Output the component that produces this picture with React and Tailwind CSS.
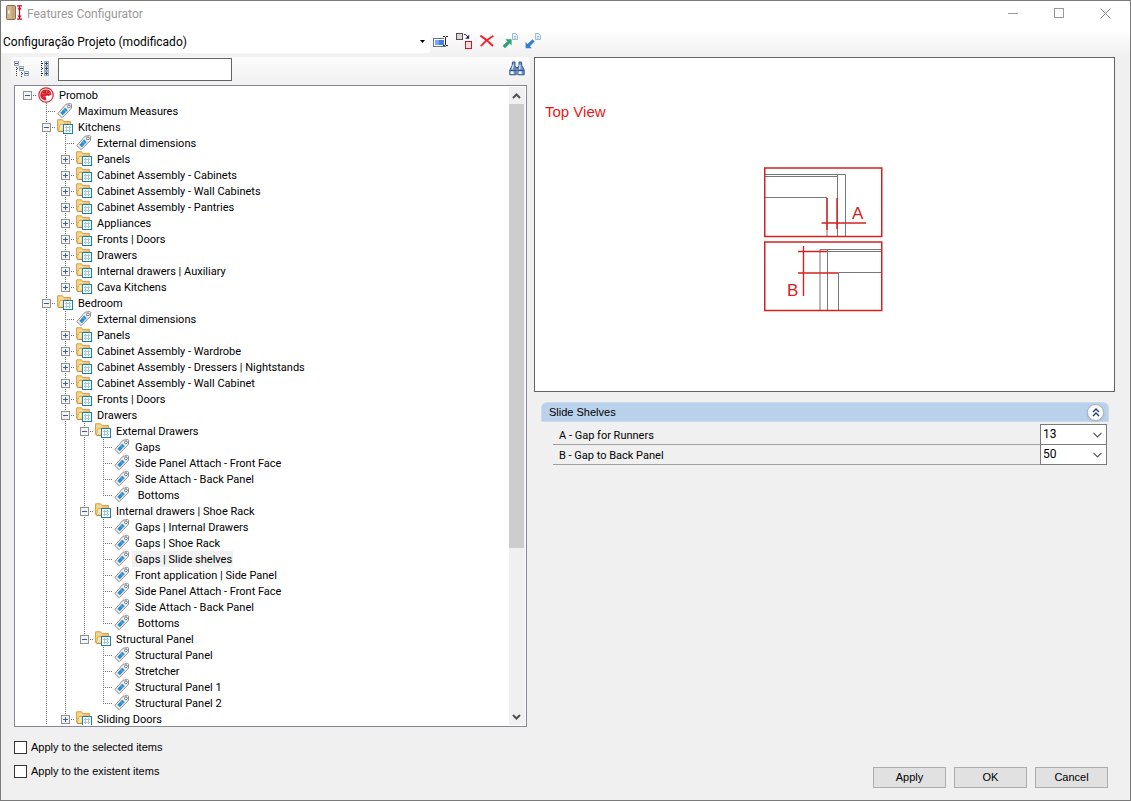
import React, { useState } from 'react';

const TREE = [
  {
    label: 'Promob',
    icon: 'root',
    open: true,
    children: [
      { label: 'Maximum Measures' },
      {
        label: 'Kitchens',
        open: true,
        children: [
          { label: 'External dimensions' },
          { label: 'Panels', children: [] },
          { label: 'Cabinet Assembly - Cabinets', children: [] },
          { label: 'Cabinet Assembly - Wall Cabinets', children: [] },
          { label: 'Cabinet Assembly - Pantries', children: [] },
          { label: 'Appliances', children: [] },
          { label: 'Fronts | Doors', children: [] },
          { label: 'Drawers', children: [] },
          { label: 'Internal drawers | Auxiliary', children: [] },
          { label: 'Cava Kitchens', children: [] },
        ],
      },
      {
        label: 'Bedroom',
        open: true,
        more: true,
        children: [
          { label: 'External dimensions' },
          { label: 'Panels', children: [] },
          { label: 'Cabinet Assembly - Wardrobe', children: [] },
          { label: 'Cabinet Assembly - Dressers | Nightstands', children: [] },
          { label: 'Cabinet Assembly - Wall Cabinet', children: [] },
          { label: 'Fronts | Doors', children: [] },
          {
            label: 'Drawers',
            open: true,
            children: [
              {
                label: 'External Drawers',
                open: true,
                children: [
                  { label: 'Gaps' },
                  { label: 'Side Panel Attach - Front Face' },
                  { label: 'Side Attach - Back Panel' },
                  { label: ' Bottoms' },
                ],
              },
              {
                label: 'Internal drawers | Shoe Rack',
                open: true,
                children: [
                  { label: 'Gaps | Internal Drawers' },
                  { label: 'Gaps | Shoe Rack' },
                  { label: 'Gaps | Slide shelves' },
                  { label: 'Front application | Side Panel' },
                  { label: 'Side Panel Attach - Front Face' },
                  { label: 'Side Attach - Back Panel' },
                  { label: ' Bottoms' },
                ],
              },
              {
                label: 'Structural Panel',
                open: true,
                children: [
                  { label: 'Structural Panel' },
                  { label: 'Stretcher' },
                  { label: 'Structural Panel 1' },
                  { label: 'Structural Panel 2' },
                ],
              },
            ],
          },
          { label: 'Sliding Doors', children: [] },
        ],
      },
    ],
  },
];

// guides holds one boolean per ancestor: does its line go on below this row
// more: siblings that are not loaded yet, so the line is not closed
function flatten(nodes, guides = [], path = '') {
  return nodes.flatMap((node, i) => {
    const last = i === nodes.length - 1 && !node.more;
    const id = `${path}/${i}`;
    const row = { ...node, id, guides, last };
    if (!node.open) return [row];
    return [row, ...flatten(node.children, [...guides, !last], id)];
  });
}

const ROWS = flatten(TREE);

const dots = { stroke: '#707070', strokeDasharray: '1 1', shapeRendering: 'crispEdges' };

function GuideLine({ show }) {
  return (
    <svg width="19" height="16" className="shrink-0">
      {show && <path d="M9.5 0V16" {...dots} />}
    </svg>
  );
}

function Branch({ row }) {
  const root = row.guides.length === 0;
  return (
    <svg width="19" height="16" className="shrink-0">
      {!root && <path d={row.last ? 'M9.5 0V8' : 'M9.5 0V16'} {...dots} />}
      <path d="M9 8.5H19" {...dots} />
      {row.children && (
        <g shapeRendering="crispEdges">
          <rect x="5.5" y="4.5" width="8" height="8" fill="#f4f4f4" stroke="#919191" />
          <path d="M7 8.5H12" stroke="#3c5a9a" />
          {!row.open && <path d="M9.5 6V11" stroke="#3c5a9a" />}
        </g>
      )}
    </svg>
  );
}

function FolderIcon() {
  return (
    <svg width="16" height="16" viewBox="0 0 16 16" className="ml-px shrink-0">
      <path d="M0.6 0.8H5.6L6.6 2.4H13.4V12.4H1.6L0.6 11Z" fill="#f8d98c" stroke="#d09a45" />
      <path d="M1.2 12.4L3 5.4H7L8 4.2H14" fill="#fde9b0" stroke="#d8a44c" strokeWidth="0.9" />
      <path d="M1.4 12.5H6" stroke="#c58a35" />
      <g shapeRendering="crispEdges">
        <rect x="6.5" y="5.5" width="9" height="9" fill="#fff" stroke="#1a7fb8" />
        <path d="M8 8.5H14M8 11.5H14M9.5 7V13M12.5 7V13" stroke="#9cc8e8" />
      </g>
    </svg>
  );
}

function TagIcon() {
  return (
    <svg width="16" height="16" viewBox="0 0 16 16" className="ml-px shrink-0">
      <path d="M9 1.2L13.6 0.6Q14.6 0.6 14.6 1.6L14.4 5.4L5.2 14.6L0.8 10.6Z" fill="#f5f5f5" stroke="#8a8a8a" />
      <path d="M8.2 4.6L10.8 7L5.8 12.2L3.2 10Z" fill="#2f8fd0" />
      <path d="M6.6 6.2L9.2 8.6" stroke="#8cc6ea" strokeWidth="0.7" />
      <circle cx="11.9" cy="3.4" r="1.4" fill="#fff" stroke="#777" strokeWidth="1" />
    </svg>
  );
}

function RootIcon() {
  return (
    <svg width="16" height="16" viewBox="0 0 16 16" className="ml-px shrink-0">
      <circle cx="8" cy="8" r="7.2" fill="#fff" stroke="#d8232f" strokeWidth="1.2" />
      <path d="M9 2.6A5.5 5.5 0 0 0 5.2 12.8L8.2 13.6V11.2L7.2 9.2L9.4 8.4L10.6 9L13.4 7.4A5.5 5.5 0 0 0 9 2.6Z" fill="#d8232f" />
      <path d="M4 6.4L6.4 6.8M9 3.2L8.4 6M10.4 6.6L12.4 5.4M5 10L6.6 9" stroke="#f08a90" strokeWidth="0.7" />
    </svg>
  );
}

function TreeRow({ row, selected, onSelect }) {
  return (
    <li className="flex h-4 items-center pl-0.5">
      {/* the root's own column stays blank under its expander */}
      {row.guides.length > 0 && <GuideLine show={false} />}
      {row.guides.slice(1).map((show, i) => (
        <GuideLine key={i} show={show} />
      ))}
      <Branch row={row} />
      {row.icon === 'root' ? <RootIcon /> : row.children ? <FolderIcon /> : <TagIcon />}
      <button
        onClick={() => onSelect(row.id)}
        className={`ml-0.5 flex h-4 items-center whitespace-pre pl-[3px] pr-px pt-0.5 text-left leading-[14px] ${selected ? 'bg-[#f0f0f0]' : ''}`}
      >
        {row.label}
      </button>
    </li>
  );
}

function AppIcon() {
  return (
    <svg width="16" height="16" viewBox="0 0 16 16">
      <rect x="0.5" y="0.5" width="9" height="14" rx="1" fill="#c4a57c" stroke="#8f6f48" />
      <rect x="1.5" y="1.5" width="4" height="12" fill="#d3b98f" />
      <rect x="2" y="5.5" width="1.6" height="3" fill="#fff" />
      <path d="M11 0.8H16M11 14.2H16M13.5 1V14" stroke="#d5001c" strokeWidth="1.2" />
      <path d="M11.4 4.4L13.5 1.6L15.6 4.4ZM11.4 10.6L13.5 13.4L15.6 10.6Z" fill="#d5001c" />
    </svg>
  );
}

function RenameIcon() {
  return (
    <svg width="16" height="16" viewBox="0 0 16 16">
      <rect x="0.5" y="5.5" width="12" height="8" fill="#fff" stroke="#66758c" />
      <rect x="2" y="7" width="9" height="5" fill="#3f7fe0" />
      <rect x="2" y="7" width="4" height="5" fill="#79a8ee" />
      <path d="M12.5 3V13" fill="none" stroke="#fff" strokeWidth="3" />
      <path d="M10 3.5H12M13 3.5H15M10 12.5H12M13 12.5H15M12.5 4V12" fill="none" stroke="#222" />
    </svg>
  );
}

function CopyIcon() {
  return (
    <svg width="16" height="16" viewBox="0 0 16 16">
      <rect x="0.5" y="0.5" width="6" height="6" fill="#dcd6d8" stroke="#5a4a50" />
      <rect x="9.5" y="8.5" width="6" height="7" fill="#e8dede" stroke="#d01818" />
      <path d="M8 1.5H9.5L12 4" fill="none" stroke="#1b2a78" />
      <path d="M13.2 1.8V5.8H9.2Z" fill="#1b2a78" />
    </svg>
  );
}

function DeleteIcon() {
  return (
    <svg width="16" height="16" viewBox="0 0 16 16">
      <path d="M1.4 2.6Q8 6.6 14 13" fill="none" stroke="#f5222a" strokeWidth="2" />
      <path d="M14.4 2.8Q7 6.8 1.8 13.2" fill="none" stroke="#f5222a" strokeWidth="1.8" />
    </svg>
  );
}

function PageGlyph() {
  return (
    <g>
      <path d="M10.5 0.5H13.5L15.5 2.5V6.5H10.5Z" fill="#e4eff8" stroke="#9bbcd4" />
      <path d="M12 3.5H14M12 5H14" stroke="#8fb4cf" strokeWidth="0.8" />
    </g>
  );
}

function ExportIcon() {
  return (
    <svg width="16" height="16" viewBox="0 0 16 16">
      <path d="M3.4 6.2H9.6V12.4L7.6 10.4L3 15.2L0.6 12.8L5.4 8.2Z" fill="#2fa07a" />
      <PageGlyph />
    </svg>
  );
}

function ImportIcon() {
  return (
    <svg width="16" height="16" viewBox="0 0 16 16">
      <path d="M0.6 9V15.2H6.8L4.9 13.3L9.6 8.4L7.4 6.2L2.5 10.9Z" fill="#357fd0" />
      <PageGlyph />
    </svg>
  );
}

function CollapseTreeIcon() {
  return (
    <svg width="16" height="16" viewBox="0 0 16 16" shapeRendering="crispEdges">
      <g fill="#f0f5fa" stroke="#9aa8bc">
        <rect x="0.5" y="0.5" width="4" height="4" />
        <rect x="5.5" y="5.5" width="4" height="4" />
        <rect x="10.5" y="10.5" width="4" height="4" />
      </g>
      <path d="M1 2.5H4M6 7.5H9M11 12.5H14" stroke="#44546e" />
      <path d="M2.5 6V16M3 7.5H5M7.5 11V16M8 12.5H10" stroke="#333" strokeDasharray="1 1" />
    </svg>
  );
}

function ExpandTreeIcon() {
  return (
    <svg width="16" height="16" viewBox="0 0 16 16" shapeRendering="crispEdges">
      <path d="M4.5 0V16M5 2.5H8M5 7.5H8M5 12.5H8" stroke="#222" strokeDasharray="1 1" />
      <g fill="#e6eef6" stroke="#9aa8bc">
        <rect x="7.5" y="0.5" width="4" height="4" />
        <rect x="7.5" y="5.5" width="4" height="4" />
        <rect x="7.5" y="10.5" width="4" height="4" />
      </g>
      <path d="M8 2.5H11M8 7.5H11M8 12.5H11M9.5 1V4M9.5 6V9M9.5 11V14" stroke="#33445f" />
    </svg>
  );
}

function BinocularsIcon() {
  return (
    <svg width="16" height="16" viewBox="0 0 16 16">
      <path d="M3.5 1H6V4.5L7.2 7V13.8H0.8V9L3.2 4.5Z" fill="#6f95c8" stroke="#2c4f8c" strokeWidth="0.9" />
      <path d="M12.5 1H10V4.5L8.8 7V13.8H15.2V9L12.8 4.5Z" fill="#6f95c8" stroke="#2c4f8c" strokeWidth="0.9" />
      <path d="M4.4 3.6L3 8.6M11 3.6L10.6 8.6" stroke="#d6e4f5" strokeWidth="1.3" />
      <rect x="1.6" y="10.4" width="3" height="2.6" fill="#f2f7fc" />
      <rect x="9.6" y="10.4" width="3" height="2.6" fill="#f2f7fc" />
      <path d="M1 9.4H7.2M8.8 9.4H15M7 6.6H9" stroke="#2c4f8c" />
    </svg>
  );
}

function Diagram() {
  return (
    <svg width="119" height="145" viewBox="0 0 119 145">
      <g fill="none" stroke="#777" strokeWidth="1">
        <path d="M1 7.5H81.5V69M1 9.5H74M1 30.5H63V69M73.5 7.5V69" />
        <path d="M118 82.5H56V144M118 84.5H64M63.5 83V144M118 105.5H74.5V144" />
      </g>
      <g fill="none" stroke="#d42222">
        <rect x="0.75" y="1" width="117" height="68.5" strokeWidth="1.5" />
        <rect x="0.75" y="75" width="117" height="68.5" strokeWidth="1.5" />
        <path d="M63 31V63M73 31V62M57.5 56H102M39.5 79V129M34 84.5H63M34 106H74" strokeWidth="1.4" />
      </g>
      <g fill="#d42222" fontFamily="Liberation Sans, sans-serif" fontSize="17">
        <text x="88" y="52">A</text>
        <text x="23" y="129">B</text>
      </g>
    </svg>
  );
}

function PropertyRow({ id, label, value, options }) {
  return (
    <div className="flex h-5 items-end font-['Roboto',sans-serif]">
      <label htmlFor={id} className="h-5 flex-1 border-b border-[#a0a0a0] pl-1.5 pt-px leading-5">
        {label}
      </label>
      <div className="-mt-px grid h-[21px] w-[67px] shrink-0 items-center border border-[#7a7a7a] bg-white">
        <select
          id={id}
          defaultValue={value}
          className="col-start-1 row-start-1 h-[19px] w-full appearance-none bg-transparent pl-0.5 text-xs leading-[19px] outline-none"
        >
          {options.map((o) => (
            <option key={o}>{o}</option>
          ))}
        </select>
        <svg width="9" height="6" viewBox="0 0 9 6" className="pointer-events-none col-start-1 row-start-1 mr-1 justify-self-end">
          <path d="M0.5 0.8L4.5 4.8L8.5 0.8" fill="none" stroke="#555" strokeWidth="1.2" />
        </svg>
      </div>
    </div>
  );
}

const toolbar = [
  { title: 'Rename', Icon: RenameIcon },
  { title: 'Copy', Icon: CopyIcon },
  { title: 'Delete', Icon: DeleteIcon },
  { title: 'Export', Icon: ExportIcon },
  { title: 'Import', Icon: ImportIcon },
];

function App() {
  const [selected, setSelected] = useState(ROWS.find((r) => r.label === 'Gaps | Slide shelves').id);
  const [search, setSearch] = useState('');

  return (
    <div className="flex h-screen flex-col border border-[#7a7a7a] bg-[#f0f0f0] font-['Liberation_Sans',sans-serif] text-[11px] text-black">
      {/* title bar */}
      <header className="flex h-7 shrink-0 items-start bg-white pl-[5px] pr-0.5 text-[#999]">
        <div className="flex h-6 flex-1 items-center gap-[5px]">
          <AppIcon />
          <h1 className="pt-0.5 font-['Roboto',sans-serif] text-xs">Features Configurator</h1>
        </div>
        <button aria-label="Minimize" className="flex h-6 w-[46px] items-center justify-center">
          <svg width="11" height="11"><path d="M0 5.5H10" stroke="#999" /></svg>
        </button>
        <button aria-label="Maximize" className="flex h-6 w-[46px] items-center justify-center">
          <svg width="11" height="11"><rect x="0.5" y="0.5" width="9" height="9" fill="none" stroke="#999" /></svg>
        </button>
        <button aria-label="Close" className="flex h-6 w-[46px] items-center justify-center">
          <svg width="11" height="11"><path d="M0.5 0.5L10.5 10.5M10.5 0.5L0.5 10.5" stroke="#888" /></svg>
        </button>
      </header>

      {/* project toolbar */}
      <div className="flex h-7 shrink-0 items-start bg-linear-to-b from-white to-[#f0f0f0]">
        <div className="flex h-6 w-[38%] items-center bg-white pr-[5px]">
          <select
            aria-label="Project configuration"
            className="h-6 flex-1 appearance-none pl-0.5 pt-0.5 font-['Roboto',sans-serif] text-xs outline-none"
          >
            <option>Configuração Projeto (modificado)</option>
          </select>
          <svg width="5" height="3"><path d="M0 0H5L2.5 3Z" fill="#000" /></svg>
        </div>
        <div className="flex h-6 items-center gap-[7px] pl-[3px]">
          {toolbar.map(({ title, Icon }) => (
            <button key={title} title={title}>
              <Icon />
            </button>
          ))}
        </div>
      </div>

      <main className="grid min-h-0 flex-1 grid-cols-[513fr_581fr] gap-[7px] pl-[13px] pr-[15px]">
        <section className="flex min-h-0 flex-col">
          <div className="-mx-[3px] flex h-7 items-center rounded-sm bg-linear-to-b from-[#fcfcfc] to-[#f0f0f0] pb-1 pl-[3px] pr-[5px]">
            <button title="Collapse all"><CollapseTreeIcon /></button>
            <button title="Expand all" className="ml-[7px]"><ExpandTreeIcon /></button>
            <input
              type="text"
              aria-label="Search"
              value={search}
              onChange={(e) => setSearch(e.target.value)}
              className="ml-[5px] h-[23px] w-[174px] border border-[#646464] bg-white px-1 outline-none"
            />
            <button title="Find" className="ml-auto"><BinocularsIcon /></button>
          </div>

          <div className="flex min-h-0 flex-1 border border-[#828790] bg-white p-px">
            <ul className="min-w-0 flex-1 overflow-hidden font-['Roboto',sans-serif]">
              {ROWS.map((row) => (
                <TreeRow key={row.id} row={row} selected={row.id === selected} onSelect={setSelected} />
              ))}
            </ul>
            <div className="flex w-4 shrink-0 flex-col bg-[#f0f0f0]">
              <button aria-label="Scroll up" className="flex h-[17px] w-[15px] items-center justify-center">
                <svg width="9" height="6"><path d="M1 5L4.5 1.5L8 5" fill="none" stroke="#505050" strokeWidth="2" /></svg>
              </button>
              <div className="flex-1">
                <div className="h-[73.5%] w-[15px] bg-[#cdcdcd]" />
              </div>
              <button aria-label="Scroll down" className="flex h-[17px] w-[15px] items-center justify-center">
                <svg width="9" height="6"><path d="M1 1L4.5 4.5L8 1" fill="none" stroke="#505050" strokeWidth="2" /></svg>
              </button>
            </div>
          </div>
        </section>

        <section className="flex flex-col">
          <div className="h-[335px] border border-[#646464] bg-white">
            <h2 className="pl-2.5 pt-11 text-[15px] leading-5 text-[#f01414]">Top View</h2>
            <div className="flex justify-center pr-0.5 pt-[45px]">
              <Diagram />
            </div>
          </div>

          <div className="ml-[7px] mr-1.5 mt-2.5">
            <div className="flex h-5 items-center rounded-t-md border border-[#cbdcf0] bg-[#b9d1ea] pl-[7px] pr-1">
              <h3 className="flex-1">Slide Shelves</h3>
              <button aria-label="Collapse section" className="flex size-[17px] items-center justify-center rounded-full border border-[#a8b0bc] bg-white shadow">
                <svg width="8" height="9" viewBox="0 0 8 9">
                  <path d="M1 4L4 1L7 4M1 8L4 5L7 8" fill="none" stroke="#1f3c78" strokeWidth="1.4" />
                </svg>
              </button>
            </div>
            <div className="ml-3 mr-0.5 mt-[3px]">
              <PropertyRow id="gap-a" label="A - Gap for Runners" value="13" options={['10', '13', '16']} />
              <PropertyRow id="gap-b" label="B - Gap to Back Panel" value="50" options={['30', '40', '50']} />
            </div>
          </div>
        </section>
      </main>

      <footer className="flex shrink-0 items-start justify-between pb-3 pl-[13px] pr-[22px] pt-2">
        <div>
          <label className="flex h-6 items-center gap-1">
            <input type="checkbox" className="size-[13px] appearance-none border border-[#333] bg-white checked:bg-[#333]" />
            Apply to the selected items
          </label>
          <label className="flex h-6 items-center gap-1">
            <input type="checkbox" className="size-[13px] appearance-none border border-[#333] bg-white checked:bg-[#333]" />
            Apply to the existent items
          </label>
        </div>
        <div className="mt-8 flex gap-2">
          {['Apply', 'OK', 'Cancel'].map((name) => (
            <button key={name} className="h-[21px] w-[73px] border border-[#adadad] bg-[#e1e1e1]">
              {name}
            </button>
          ))}
        </div>
      </footer>
    </div>
  );
}

export default App;
